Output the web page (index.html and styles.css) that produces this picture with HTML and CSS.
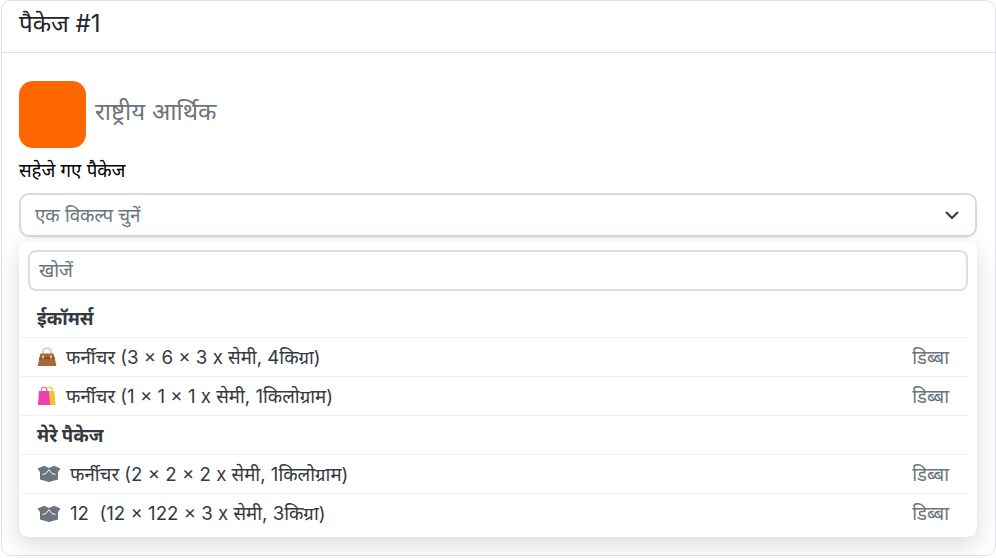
FILE: index.html
```html
<!DOCTYPE html>
<html>
<head>
<meta name="viewport" content="width=device-width, initial-scale=1">
<link rel="stylesheet" href="styles.css">
</head>
<body>

<div class="card">
  <div class="card-header">पैकेज #1</div>
  <div class="card-body">
    <div class="carrier">
      <div class="carrier-logo"></div>
      <span class="carrier-name">राष्ट्रीय आर्थिक</span>
    </div>

    <label class="field-label">सहेजे गए पैकेज</label>
    <div class="select">
      <div class="select-box">
        <span class="select-text">एक विकल्प चुनें</span>
        <svg class="chevron" viewBox="0 0 16 16" width="16" height="16"><path d="M2.5 5.5 8 11l5.5-5.5" fill="none" stroke="#343a40" stroke-width="2" stroke-linecap="round" stroke-linejoin="round"/></svg>
      </div>

      <div class="menu">
        <div class="menu-search">
          <div class="search-box">खोजें</div>
        </div>
        <div class="menu-list">
          <div class="group-title group-first">ईकॉमर्स</div>
          <div class="option">
            <svg class="icon-emoji" viewBox="0 0 20 20" width="20" height="20">
              <path d="M6 8V4.500C6 2.500 7.500 1.200 10 1.200S14 2.500 14 4.500V8" fill="none" stroke="#e8c4a8" stroke-width="1.6"/>
              <path d="M3.500 6.500h13L19.500 19H.5z" fill="#a9683a"/>
              <path d="M2.500 10h15l.6 2.200H2z" fill="#8a5129"/>
              <rect x="5" y="8.500" width="2" height="3" fill="#e2c199"/>
              <rect x="13" y="8.500" width="2" height="3" fill="#e2c199"/>
            </svg>
            <span class="option-text">फर्नीचर (3 × 6 × 3 x सेमी, 4किग्रा)</span>
            <span class="option-type">डिब्बा</span>
          </div>
          <div class="option">
            <svg class="icon-emoji" viewBox="0 0 20 20" width="20" height="20">
              <path d="M10 6V3.500C10 2 11 1 12.500 1S15 2 15 3.500V6" fill="none" stroke="#f2c230" stroke-width="1.2"/>
              <path d="M10 5h7.500l1 14H10z" fill="#eec335"/>
              <path d="M4.500 6V3.500C4.500 2 5.500 1.200 7 1.200S9.500 2 9.500 3.500V6" fill="none" stroke="#f26fc0" stroke-width="1.2"/>
              <path d="M2 5h10l1 14H1z" fill="#f03fb0"/>
            </svg>
            <span class="option-text">फर्नीचर (1 × 1 × 1 x सेमी, 1किलोग्राम)</span>
            <span class="option-type">डिब्बा</span>
          </div>
          <div class="group-title">मेरे पैकेज</div>
          <div class="option">
            <svg class="icon-box" viewBox="0 0 24 18" width="24" height="18"><path d="M.5 3.500 7 .8l5 2.200 5-2.200 6.500 2.700L21 7v7.500L12 17l-9-2.500V7z" fill="#6c757d"/><path d="M5.500 9.500 9 8.500l3-3.700 3 3.700 3.500 1" fill="none" stroke="#fff" stroke-width="1"/></svg>
            <span class="option-text">फर्नीचर (2 × 2 × 2 x सेमी, 1किलोग्राम)</span>
            <span class="option-type">डिब्बा</span>
          </div>
          <div class="option option-last">
            <svg class="icon-box" viewBox="0 0 24 18" width="24" height="18"><path d="M.5 3.500 7 .8l5 2.200 5-2.200 6.500 2.700L21 7v7.500L12 17l-9-2.500V7z" fill="#6c757d"/><path d="M5.500 9.500 9 8.500l3-3.700 3 3.700 3.500 1" fill="none" stroke="#fff" stroke-width="1"/></svg>
            <span class="option-text">12&nbsp; (12 × 122 × 3 x सेमी, 3किग्रा)</span>
            <span class="option-type">डिब्बा</span>
          </div>
        </div>
      </div>
    </div>
  </div>
</div>

</body>
</html>
```

FILE: styles.css
```css
* {
    box-sizing: border-box;
}

body {
    margin: 0;
    background: #fff;
    font-family: Inter, "Noto Sans", sans-serif;
    font-size: 18.67px;
    color: #212529;
}

/* Outer card */
.card {
    width: 995px;
    height: 556px;
    margin-left: 1px;
    border: 1.33px solid #dee2e6;
    border-radius: 10px;
}

.card-header {
    height: 52px;
    padding: 8px 17px 0;
    font-size: 24px;
    line-height: 30px;
    border-bottom: 1.33px solid #dee2e6;
}

.card-body {
    padding: 28px 17px 0;
}

/* Carrier row */
.carrier {
    display: flex;
    align-items: center;
    gap: 9px;
    height: 67px;
}

.carrier-logo {
    width: 67px;
    height: 67px;
    background: #ff6600;
    border-radius: 14px;
}

.carrier-name {
    margin-bottom: 6px;
    font-size: 24px;
    line-height: 60px;
    color: #6c757d;
}

.field-label {
    display: block;
    margin-top: 11px;
    line-height: 24px;
    color: #000;
}

/* Select and its open menu */
.select {
    position: relative;
    margin-top: 10px;
}

.select-box {
    display: flex;
    align-items: center;
    justify-content: space-between;
    width: 958px;
    height: 44px;
    padding: 0 15px 0 14px;
    border: 2px solid #d5dae0;
    border-radius: 10px;
    color: #6c757d;
    box-shadow: 0 1px 2px rgba(0, 0, 0, 0.08);
}

.select-text {
    margin-bottom: 2px;
}

.menu {
    position: absolute;
    top: 48px;
    left: 0;
    width: 958px;
    height: 296px;
    background: #fff;
    border-radius: 10px;
    box-shadow: 0 8px 24px rgba(0, 0, 0, 0.15);
}

.menu-search {
    padding: 9px 9px 0;
}

.search-box {
    height: 41px;
    padding: 0 9px;
    border: 2px solid #dadfe4;
    border-radius: 8px;
    line-height: 38px;
    color: #6c757d;
}

/* the list sits in its own box, its edge shows beside the menu */
.menu-list {
    height: 237px;
    margin-top: 7px;
    box-shadow: -1px 0 0 #e6e8ea, 1px 0 0 #e6e8ea;
}

.group-title {
    height: 39px;
    margin: 0 9px 0 1px;
    padding-left: 17px;
    line-height: 39px;
    font-weight: 700;
    color: #343a40;
    border-bottom: 1.33px solid #eceef0;
}

.group-first {
    height: 40px;
    line-height: 41px;
}

.option {
    display: flex;
    align-items: center;
    height: 39px;
    margin: 0 9px 0 1px;
    padding: 0 19px 0 17px;
    color: #343a40;
    border-bottom: 1.33px solid #eceef0;
}

.option-last {
    border-bottom: 0;
}

.icon-emoji {
    margin-right: 9px;
}

.icon-box {
    margin-right: 9px;
}

.option-text {
    flex: 1;
    margin-bottom: 2px;
}

.option-type {
    margin-bottom: 2px;
    color: #6c757d;
}
```
